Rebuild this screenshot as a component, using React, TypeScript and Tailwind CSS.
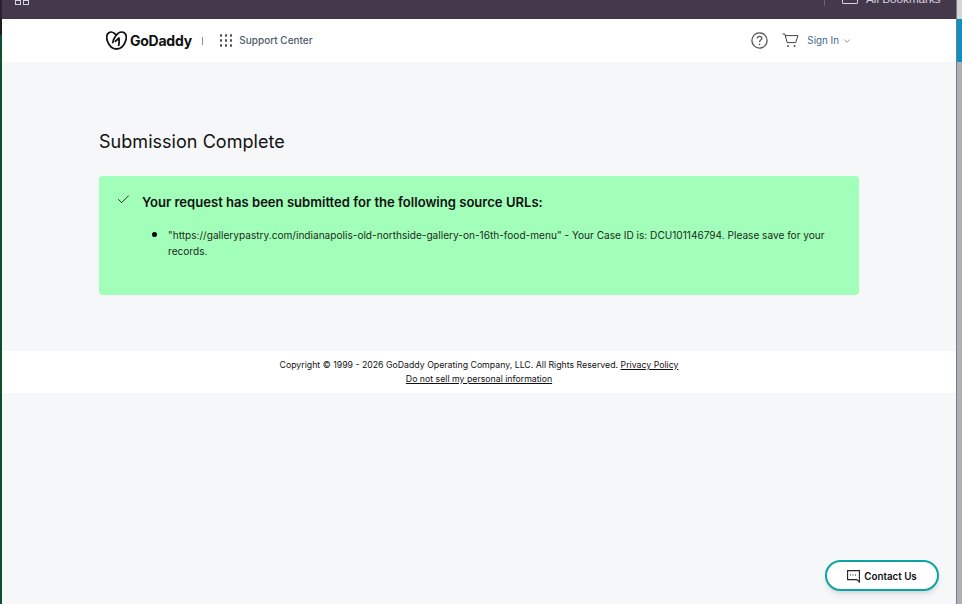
import React from "react";
import { ChevronDown, Check } from "lucide-react";

const Logo = () => (
  <svg width="21" height="19" viewBox="0 0 21 19" fill="none" stroke="#111" strokeWidth="1.800" strokeLinecap="round" strokeLinejoin="round">
    <path d="M9.200 3.200C7.500 1.200 4.600.5 2.800 1.800.5 3.500.3 7.200 1.500 10.300 3 14.600 6.500 18 10.500 18c4 0 7.500-3.400 9-7.700 1.200-3.100 1-6.800-1.300-8.500C15.800.1 12.300 1.500 10 4.500 8.300 6.700 7.100 9 6.800 11.500" />
    <path d="M9.400 10.300l3.600-3.300c.3 2.500.2 5-.3 7.400" />
  </svg>
);

const Cart = () => (
  <svg width="17" height="15" viewBox="0 0 17 15" fill="none" stroke="#444" strokeWidth="1">
    <path d="M0.500 1h2.400l2.200 8.600h8.600L16 2.600H3.400" />
    <circle cx="6" cy="13" r="0.900" fill="#444" stroke="none" />
    <circle cx="12.600" cy="13" r="0.900" fill="#444" stroke="none" />
  </svg>
);

const Help = () => (
  <svg width="17" height="17" viewBox="0 0 17 17" fill="none">
    <circle cx="8.500" cy="8.500" r="7.600" stroke="#555" strokeWidth="1.300" />
    <path d="M6.200 6.600c0-1.400 1-2.200 2.300-2.200s2.300.8 2.300 2c0 1.700-2.300 1.700-2.300 3.600" stroke="#555" strokeWidth="1.300" />
    <circle cx="8.500" cy="12.400" r="0.800" fill="#555" />
  </svg>
);

const Chat = () => (
  <svg width="13" height="13" viewBox="0 0 13 13" fill="none" stroke="#222" strokeWidth="1.100">
    <path d="M0.600 0.600h11.800v11.400l-2.600-2.400H0.600z" />
    <path d="M3 5h1M5.500 5h1M8 5h1" />
  </svg>
);

export default function App() {
  return (
    <div className="flex h-[604px] w-[962px] overflow-hidden bg-[#f5f7f8] font-['Inter',sans-serif]">
      <div className="flex w-[2px] shrink-0 flex-col">
        <div className="h-[19px] bg-[#2a2028]" />
        <div className="h-[16px] bg-[#221a1c]" />
        <div className="flex-1 bg-[#0f4f2e]" />
      </div>

      <div className="relative w-[954px] shrink-0">
        <div className="relative flex h-[19px] items-end bg-[#43384c]">
          <div className="ml-[13px] flex gap-[2px] self-start">
            <span className="h-[5px] w-[6px] border border-[#d8d4dc]" />
            <span className="h-[5px] w-[6px] border border-[#d8d4dc]" />
          </div>
          <div className="absolute left-[822px] top-0 h-[6px] w-px bg-[#6b6272]" />
          <div className="absolute left-[840px] top-[-8px] h-[12px] w-[16px] rounded-[1px] border border-[#d8d4dc]" />
          <span className="absolute left-[864px] top-[-9px] font-['Liberation_Sans',sans-serif] text-[11.700px] leading-[15px] text-[#d8d4dc]">All Bookmarks</span>
        </div>

        <header className="flex h-[43px] items-center bg-white pl-[104px] pr-[104px]">
          <Logo />
          <span className="ml-[3px] text-[14px] font-bold tracking-[-0.250px] text-[#111]">GoDaddy</span>
          <span className="ml-[10px] h-[8px] w-px bg-[#8a8a8a]" />
          <div className="ml-[17px] grid grid-cols-3 gap-[2.500px]">
            {Array.from({ length: 9 }).map((_, i) => (
              <span key={i} className="h-[2.500px] w-[2.500px] rounded-full bg-[#555]" />
            ))}
          </div>
          <span className="ml-[7px] text-[10px] font-medium text-[#4f5a68]">Support Center</span>
          <div className="ml-auto flex items-center">
            <Help />
            <span className="ml-[14px]"><Cart /></span>
            <span className="ml-[8px] mt-[1px] text-[9.800px] text-[#41688a]">Sign In</span>
            <ChevronDown className="ml-[3px] text-[#555]" size={10} strokeWidth={1.500} />
          </div>
        </header>

        <main className="h-[289px] pl-[97px] pt-[68px]">
          <h1 className="text-[18px] font-normal leading-[24px] tracking-[0.040px] text-[#111]">Submission Complete</h1>
          <div className="mt-[22px] h-[119px] w-[760px] rounded-[4px] bg-[#a2ffb9] pl-[17px] pt-[16px]">
            <div className="flex items-start">
              <Check className="text-[#111]" size={15} strokeWidth={1.400} />
              <span className="ml-[11px] mt-[1px] text-[13.070px] font-semibold leading-[19px] text-[#111]">
                Your request has been submitted for the following source URLs:
              </span>
            </div>
            <ul className="mt-[14px] list-disc pl-[52px] pr-[32px] text-[10.100px] leading-[16px] text-[#1c2a20] marker:text-[14px] marker:text-black">
              <li>"https://gallerypastry.com/indianapolis-old-northside-gallery-on-16th-food-menu" - Your Case ID is: DCU101146794. Please save for your records.</li>
            </ul>
          </div>
        </main>

        <footer className="flex h-[42px] flex-col items-center justify-center bg-white text-[8.750px] leading-[14px] text-[#111]">
          <p>
            Copyright © 1999 - 2026 GoDaddy Operating Company, LLC. All Rights Reserved. <a className="underline">Privacy Policy</a>
          </p>
          <a className="underline">Do not sell my personal information</a>
        </footer>

        <button className="absolute left-[823px] top-[560px] flex h-[31px] w-[114px] items-center justify-center rounded-full border-2 border-[#0ba3a3] bg-white pt-[1px] text-[9.800px] font-semibold text-[#111] shadow-md">
          <Chat />
          <span className="ml-[4px] mt-[2px]">Contact Us</span>
        </button>
      </div>

      <div className="flex flex-1 flex-col border-l border-[#777c84]">
        <div className="h-[19px] bg-[#d6d6d6]" />
        <div className="h-[43px] bg-[#0c91c0]" />
        <div className="flex-1 bg-[#adb0b6]" />
      </div>
    </div>
  );
}
